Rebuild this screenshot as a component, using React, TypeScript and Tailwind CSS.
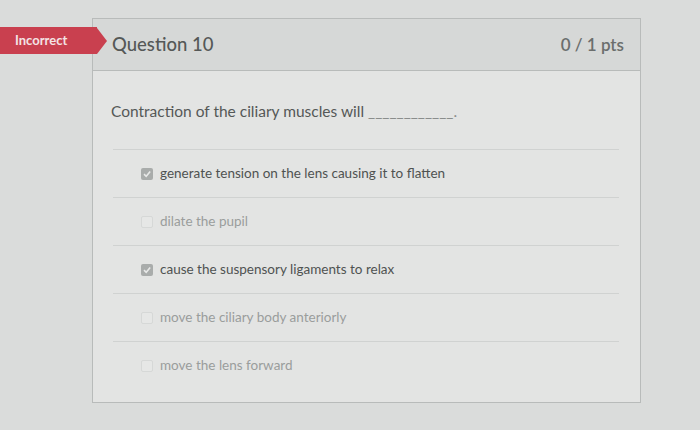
import React from 'react';

const answers = [
  { text: 'generate tension on the lens causing it to flatten', checked: true },
  { text: 'dilate the pupil', checked: false },
  { text: 'cause the suspensory ligaments to relax', checked: true },
  { text: 'move the ciliary body anteriorly', checked: false },
  { text: 'move the lens forward', checked: false },
];

function Box({ checked }: { checked: boolean }) {
  if (checked) {
    return (
      <span className="flex h-[12px] w-[12px] items-center justify-center rounded-[2px] bg-[#a9acab]">
        <svg width="10" height="10" viewBox="0 0 10 10">
          <path d="M2 5.2 L4.2 7.3 L8.2 2.6" fill="none" stroke="#e8e9e8" strokeWidth="1.6" />
        </svg>
      </span>
    );
  }
  return <span className="h-[12px] w-[12px] rounded-[2px] border border-[#d6d8d7] bg-[#e6e7e6]" />;
}

export default function App() {
  return (
    <div
      className="relative h-[430px] w-[700px] overflow-hidden bg-[#dadcdb] pt-[18px] pl-[92px]"
      style={{ fontFamily: 'Lato, "Open Sans", sans-serif' }}
    >
      <div className="w-[549px] border border-[#b8bbba] bg-[#e3e4e3]">
        <div className="flex h-[52px] items-center justify-between border-b border-[#b8bbba] bg-[#d6d8d7] pl-[19px] pr-[16px]">
          <span className="text-[18.5px] font-medium text-[#555857]">Question 10</span>
          <span className="text-[17px] font-semibold text-[#6b6e6d]">0 / 1 pts</span>
        </div>
        <div className="pb-[13px]">
          <div className="px-[18px] pt-[30px] pb-[28px] text-[15.5px] leading-[20px] text-[#555857]">
            Contraction of the ciliary muscles will{' '}
            <span className="text-[#8a8d8c]">____________.</span>
          </div>
          <div className="mx-[20px] mr-[21px]">
            {answers.map((a) => (
              <div key={a.text} className="flex h-[48px] items-center gap-[7px] border-t border-[#d0d2d1] pl-[28px]">
                <Box checked={a.checked} />
                <span className={`text-[13.5px] ${a.checked ? 'text-[#4f5251]' : 'text-[#9a9d9c]'}`}>{a.text}</span>
              </div>
            ))}
          </div>
        </div>
      </div>
      <div className="absolute left-0 top-[27px] flex h-[27px] items-center">
        <div className="flex h-full w-[97px] items-center bg-[#c9404f] pl-[15px] text-[13px] font-bold text-[#f3e3e5]">
          Incorrect
        </div>
        <div className="h-0 w-0 border-y-[13.5px] border-l-[10px] border-y-transparent border-l-[#c9404f]" />
      </div>
    </div>
  );
}
